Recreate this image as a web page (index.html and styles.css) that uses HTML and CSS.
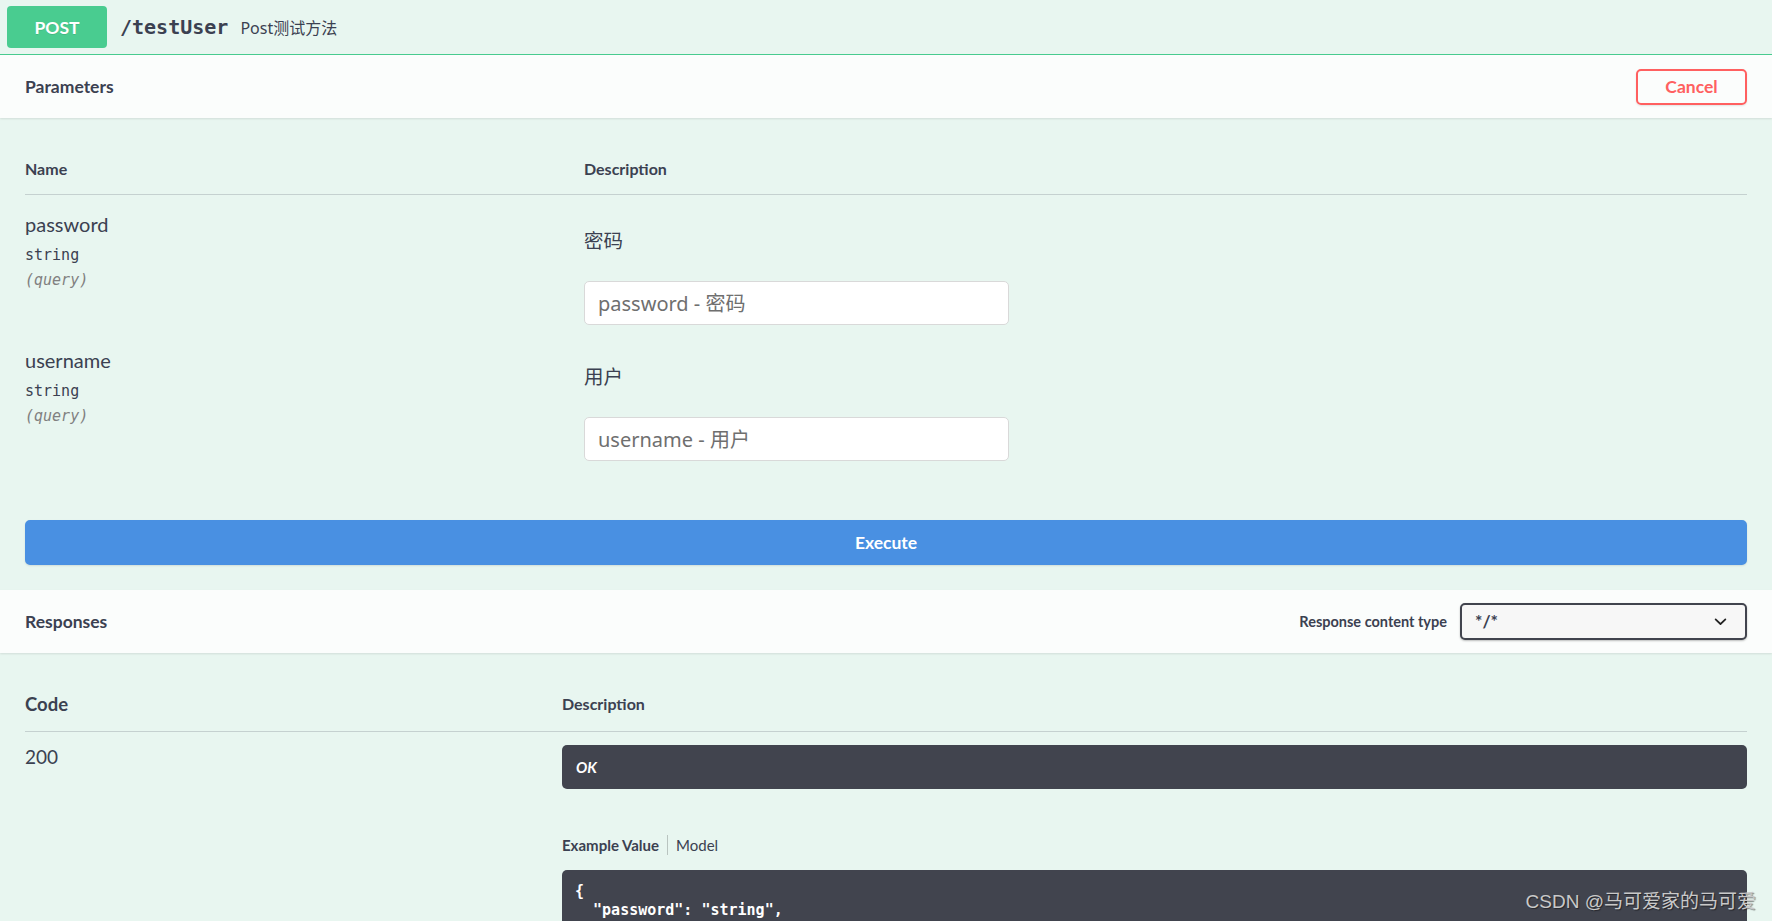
FILE: index.html
```html
<!DOCTYPE html>
<html lang="zh-CN">
<head>
<meta charset="utf-8">
<title>testUser</title>
<link rel="stylesheet" href="styles.css">
</head>
<body>
<div class="opblock">
  <div class="summary">
    <span class="method">POST</span>
    <span class="path">/testUser</span>
    <span class="summary-desc">Post测试方法</span>
  </div>

  <div class="section-header">
    <h4 class="section-title">Parameters</h4>
    <button class="btn-cancel">Cancel</button>
  </div>

  <div class="params">
    <div class="params-head">
      <div class="col-name">Name</div>
      <div class="col-desc">Description</div>
    </div>
    <div class="param-row">
      <div class="col-name">
        <div class="param-name">password</div>
        <div class="param-type">string</div>
        <div class="param-in">(query)</div>
      </div>
      <div class="col-desc">
        <p class="param-text">密码</p>
        <input class="param-input" type="text" placeholder="password - 密码">
      </div>
    </div>
    <div class="param-row">
      <div class="col-name">
        <div class="param-name">username</div>
        <div class="param-type">string</div>
        <div class="param-in">(query)</div>
      </div>
      <div class="col-desc">
        <p class="param-text">用户</p>
        <input class="param-input" type="text" placeholder="username - 用户">
      </div>
    </div>
  </div>

  <div class="execute-wrapper">
    <button class="btn-execute">Execute</button>
  </div>

  <div class="section-header">
    <h4 class="section-title">Responses</h4>
    <div class="content-type">
      <span class="content-type-label">Response content type</span>
      <div class="select">
        <span class="select-value">*/*</span>
        <svg class="chevron" width="25" height="25" viewBox="0 0 20 20"><path d="M13.418 7.859a.695.695 0 01.978 0 .68.68 0 010 .969l-3.908 3.83a.697.697 0 01-.979 0l-3.908-3.83a.68.68 0 010-.969.695.695 0 01.978 0L10 11l3.418-3.141z" fill="#222"/></svg>
      </div>
    </div>
  </div>

  <div class="responses">
    <div class="resp-head">
      <div class="col-code">Code</div>
      <div class="col-rdesc">Description</div>
    </div>
    <div class="resp-row">
      <div class="col-code status">200</div>
      <div class="col-rdesc">
        <div class="resp-markdown"><em>OK</em></div>
        <ul class="tabs">
          <li class="tab tab-active">Example Value</li>
          <li class="tab">Model</li>
        </ul>
<pre class="code">{
  "password": "string",</pre>
      </div>
    </div>
  </div>
</div>
<div class="watermark">CSDN @马可爱家的马可爱</div>
</body>
</html>
```

FILE: styles.css
```css
html, body {
  margin: 0;
  padding: 0;
  height: 921px;
  overflow: hidden;
}

body {
  position: relative;
  background: #ffffff;
  color: #3b4151;
  font-family: "Lato", "Noto Sans CJK SC", sans-serif;
}

.opblock {
  background: rgb(232, 246, 240);
  min-height: 921px;
}

/* summary bar */
.summary {
  display: flex;
  align-items: center;
  padding: 6px 7px;
  border-bottom: 1px solid #49cc90;
}

.method {
  display: flex;
  align-items: center;
  justify-content: center;
  width: 100px;
  height: 42px;
  border-radius: 4px;
  background: #49cc90;
  color: #fff;
  font-size: 17.5px;
  font-weight: 700;
  text-shadow: 0 1px 0 rgba(0, 0, 0, .1);
}

.path {
  padding: 0 12px 0 13px;
  font-family: "DejaVu Sans Mono", monospace;
  font-size: 20px;
  font-weight: 600;
  color: #3b4151;
}

.summary-desc {
  font-family: "Noto Sans", "Noto Sans CJK SC", sans-serif;
  font-size: 16px;
  color: #3b4151;
}

/* section headers */
.section-header {
  display: flex;
  align-items: center;
  justify-content: space-between;
  height: 63px;
  padding: 0 25px;
  background: rgba(255, 255, 255, .8);
  box-shadow: 0 1px 2px rgba(0, 0, 0, .1);
  position: relative;
}

.section-title {
  margin: 0;
  font-size: 17.5px;
  font-weight: 700;
  color: #3b4151;
}

.btn-cancel {
  width: 111px;
  height: 36px;
  background: transparent;
  border: 2.5px solid #ff6060;
  border-radius: 5px;
  color: #ff6060;
  font-family: "Lato", sans-serif;
  font-size: 17.5px;
  font-weight: 700;
  box-shadow: 0 1px 2px rgba(0, 0, 0, .1);
  padding: 0;
}

/* parameters table */
.params {
  padding: 26px 25px 28px;
}

.params-head {
  display: flex;
  padding: 15px 0;
  line-height: 20px;
  font-size: 16px;
  font-weight: 700;
  border-bottom: 1px solid rgba(59, 65, 81, .2);
}

.col-name {
  width: 559px;
  flex: none;
}

.col-desc {
  flex: 1;
}

.param-row {
  display: flex;
  padding: 14px 0 6px;
}

.param-name {
  font-size: 20px;
  line-height: 30px;
  color: #3b4151;
}

.param-type {
  font-family: "DejaVu Sans Mono", monospace;
  font-size: 15px;
  font-weight: 400;
  line-height: 19px;
  padding: 7px 0 6px;
  color: #3b4151;
}

.param-in {
  font-family: "DejaVu Sans Mono", monospace;
  font-size: 15px;
  font-style: italic;
  line-height: 19px;
  color: #808080;
}

.param-text {
  margin: 21px 0 0;
  font-family: "Noto Sans", "Noto Sans CJK SC", sans-serif;
  font-size: 19.5px;
  line-height: 22px;
}

.param-input {
  display: block;
  box-sizing: border-box;
  margin-top: 29px;
  width: 425px;
  height: 44px;
  padding: 0 13px;
  border: 1px solid #d9d9d9;
  border-radius: 5px;
  background: #fff;
  font-family: "Noto Sans", "Noto Sans CJK SC", sans-serif;
  font-size: 20px;
  color: #3b4151;
  outline: none;
}

.param-input::placeholder {
  color: #6f6f6f;
}

/* execute */
.execute-wrapper {
  padding: 25px;
}

.btn-execute {
  display: block;
  width: 100%;
  height: 45px;
  border: 2px solid #4990e2;
  border-radius: 5px;
  background: #4990e2;
  color: #fff;
  font-family: "Lato", sans-serif;
  font-size: 17.5px;
  font-weight: 700;
  box-shadow: 0 1px 2px rgba(0, 0, 0, .1);
}

/* content type */
.content-type {
  display: flex;
  align-items: center;
}

.content-type-label {
  font-size: 14.5px;
  font-weight: 700;
  margin-right: 13px;
}

.select {
  display: flex;
  align-items: center;
  justify-content: space-between;
  box-sizing: border-box;
  width: 287px;
  height: 37px;
  padding: 0 12px 0 13px;
  border: 2.5px solid #41444e;
  border-radius: 5px;
  background: #f7f7f7;
  box-shadow: 0 1px 2px rgba(0, 0, 0, .25);
  font-size: 17.5px;
  font-weight: 700;
  color: #3b4151;
}

.chevron {
  display: block;
}

/* responses */
.responses {
  padding: 25px;
}

.resp-head {
  display: flex;
  align-items: center;
  padding: 15px 0 16px;
  line-height: 22px;
  font-weight: 700;
  border-bottom: 1px solid rgba(59, 65, 81, .2);
}

.resp-head .col-code {
  font-size: 18.5px;
}

.resp-head .col-rdesc {
  font-size: 16px;
}

.col-code {
  width: 537px;
  flex: none;
}

.col-rdesc {
  flex: 1;
}

.resp-row {
  display: flex;
  padding-top: 13px;
}

.status {
  font-size: 19px;
  line-height: 24px;
}

.resp-markdown {
  box-sizing: border-box;
  height: 44px;
  padding: 12px 14px;
  border-radius: 5px;
  background: #41444e;
  color: #fff;
  font-size: 15px;
  line-height: 20px;
}

.resp-markdown em {
  font-weight: 700;
  font-style: italic;
}

.tabs {
  display: flex;
  margin: 46px 0 0;
  padding: 0;
  list-style: none;
  font-size: 15px;
  line-height: 20px;
}

.tab {
  color: #3b4151;
}

.tab-active {
  font-weight: 700;
  padding-right: 8px;
  border-right: 1px solid rgba(0, 0, 0, .2);
  margin-right: 8px;
}

.code {
  margin: 15px 0 0;
  padding: 12px 13px 40px;
  border-radius: 5px;
  background: #41444e;
  color: #fff;
  font-family: "DejaVu Sans Mono", monospace;
  font-size: 15px;
  font-weight: 600;
  line-height: 19px;
}

/* watermark overlay */
.watermark {
  position: absolute;
  right: 16px;
  bottom: 7px;
  font-family: "Liberation Sans", "Noto Sans CJK SC", sans-serif;
  font-size: 19px;
  line-height: 24px;
  color: #c9c9c9;
  text-shadow: 1px 1px 1px rgba(0, 0, 0, .45);
}
```
